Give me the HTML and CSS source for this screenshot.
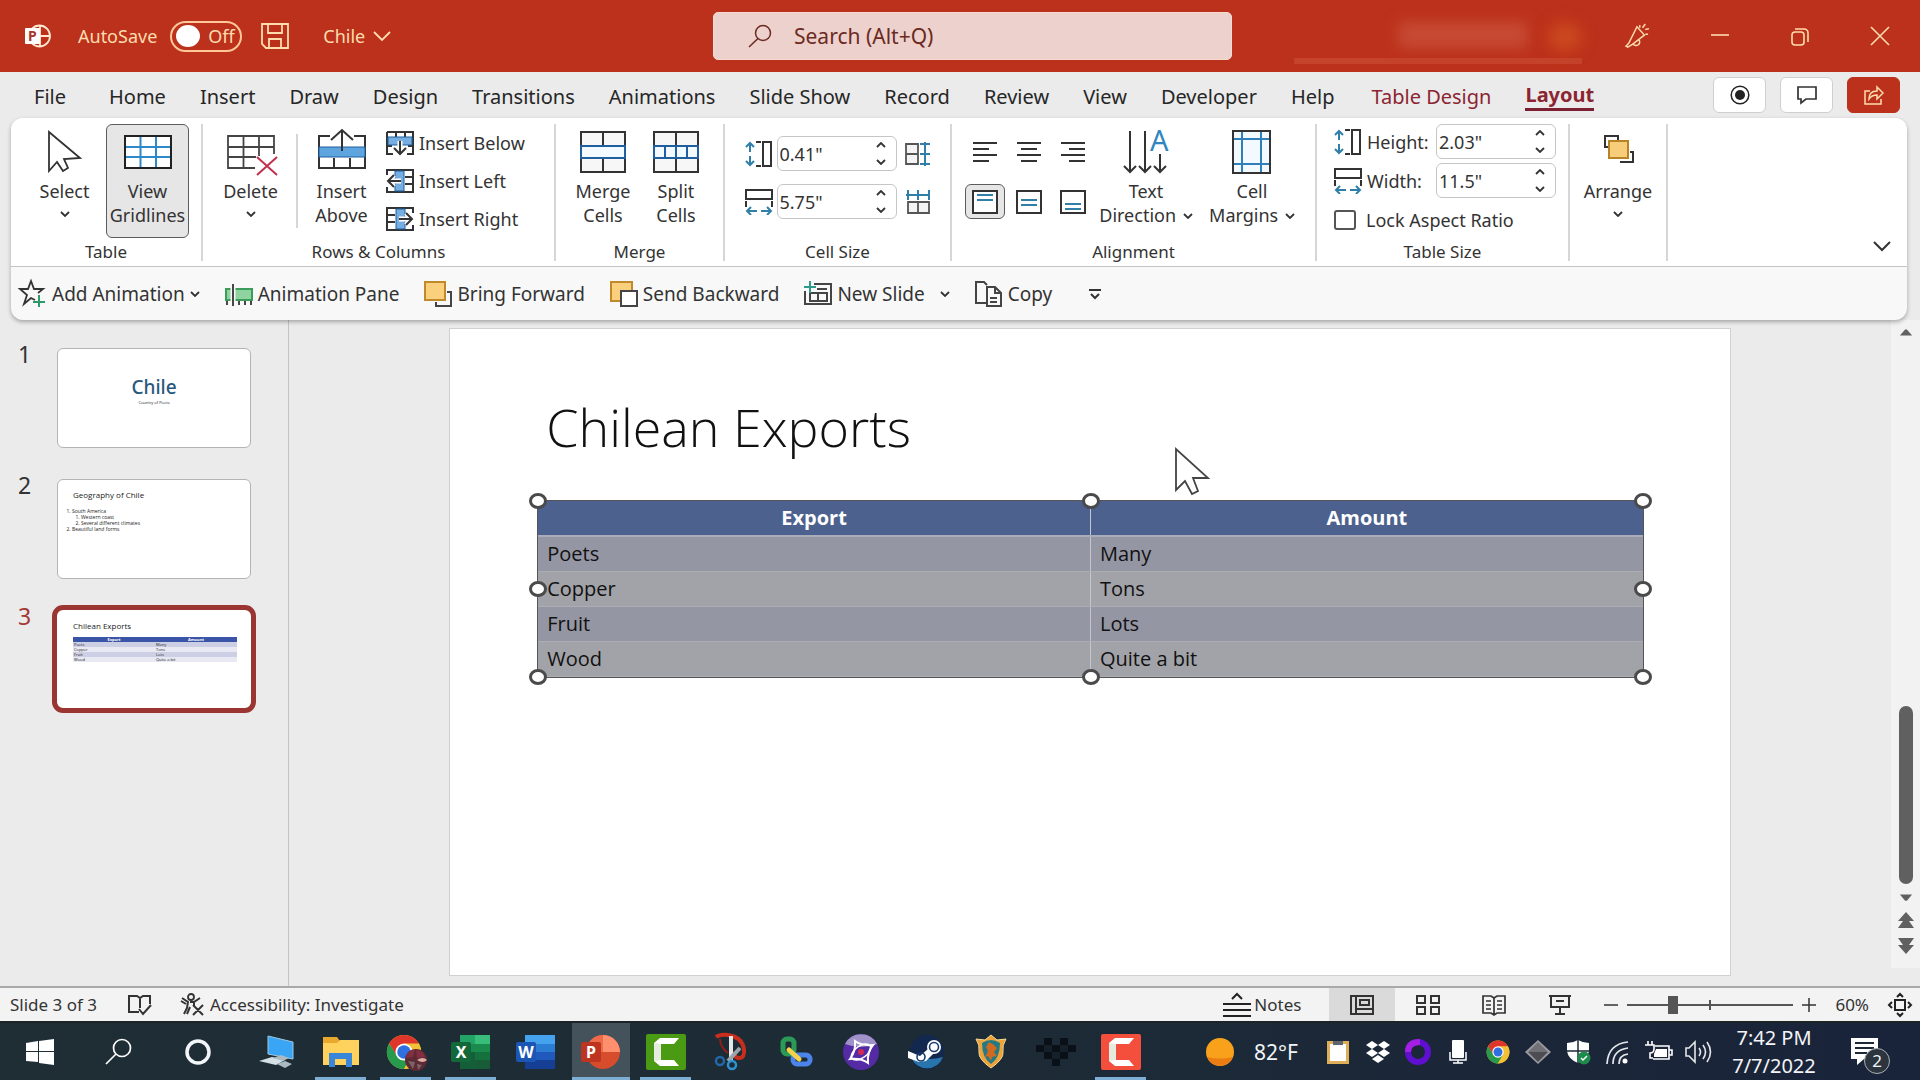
FILE: index.html
```html
<!DOCTYPE html>
<html lang="en">
<head>
  <meta charset="UTF-8">
  <title>Chile - PowerPoint</title>
  <link rel="stylesheet" href="styles.css">
</head>
<body>
  <!-- Shared icons -->
  <svg class="defs" aria-hidden="true">
    <symbol id="chev" viewBox="0 0 10 6"><path d="M1 1l4 4 4-4" fill="none" stroke="currentColor" stroke-width="1.8"/></symbol>
    <symbol id="rowHeight" viewBox="0 0 28 26"><path d="M5 2v9M5 15v9M1 6l4-4 4 4M1 20l4 4 4-4" fill="none" stroke="#2f7fa8" stroke-width="2"/><path d="M11 1h5M11 25h5M18 1h8v24h-8z" fill="none" stroke="#333" stroke-width="2"/></symbol>
    <symbol id="colWidth" viewBox="0 0 28 26"><path d="M1 1h26v9H1zM1 12v6M27 12v6" fill="none" stroke="#333" stroke-width="2"/><path d="M2 22h10M16 22h10M6 18l-4 4 4 4M22 18l4 4-4 4" fill="none" stroke="#2f7fa8" stroke-width="2"/></symbol>
    <symbol id="chrome" viewBox="0 0 40 40">
      <circle cx="20" cy="20" r="19" fill="#f3c136"/>
      <path d="M20 1A19 19 0 0 0 3.500 10.500L12 25l8-5 16.500-9.500A19 19 0 0 0 20 1z" fill="#e0352b"/>
      <path d="M3.500 10.500A19 19 0 0 0 20 39l8-14-8-5-8 4z" fill="#279a4c"/>
      <path d="M36.500 10.500H20l8.500 14.500L20 39A19 19 0 0 0 36.500 10.500z" fill="#f3c136"/>
      <circle cx="20" cy="20" r="9.500" fill="#fff"/><circle cx="20" cy="20" r="7.500" fill="#2f6fe0"/>
    </symbol>
    <symbol id="camtasia" viewBox="0 0 40 36"><path d="M33 4H14l-6 5v18l6 5h19l-5-6H15V10h13z" fill="#fff"/><path d="M8 9l7 1v16l-7 1z" fill="#e4ece0"/></symbol>
  </svg>

  <!-- Title bar -->
  <header class="titlebar">
    <div class="title-left">
      <svg class="app-icon" viewBox="0 0 26 26"><circle cx="14.500" cy="13" r="10.500" fill="none" stroke="#ffe9d0" stroke-width="1.800"/><path d="M15 2v22M15 13h10" stroke="#ffe9d0" stroke-width="1.800"/><rect y="5" width="15" height="16" rx="1" fill="#fff"/><text x="3" y="18" class="logo-letter small">P</text></svg>
      <label class="autosave" for="autosave">AutoSave</label>
      <span class="switch"><input type="checkbox" id="autosave"><span>Off</span></span>
      <button class="save" aria-label="Save"><svg viewBox="0 0 28 26"><path d="M1 1h26v24H5l-4-4zM7 1v9h14V1M8 25v-9h12v9" fill="none" stroke="#ffdcae" stroke-width="1.800"/></svg></button>
      <button class="doc-name">Chile <svg viewBox="0 0 18 10"><path d="M1 1l8 8 8-8" fill="none" stroke="#ffdcae" stroke-width="1.800"/></svg></button>
    </div>
    <div class="search">
      <svg viewBox="0 0 24 24"><circle cx="15" cy="9" r="7.500" fill="none" stroke="#6b2a22" stroke-width="1.500"/><path d="M10 14.500L1 23" stroke="#6b2a22" stroke-width="1.600"/></svg>
      <input type="text" aria-label="Search" placeholder="Search (Alt+Q)">
    </div>
    <div class="title-right">
      <div class="account"><span class="account-name"></span><span class="account-pic"></span></div>
      <button aria-label="Coming soon"><svg class="i26" viewBox="0 0 26 26"><path d="M1 24l3-3L13 3l8 9L8 22l-5 3zM9 22a3.500 3.500 0 1 0 6-5M16 1v3M22 0l-3 4M26 5l-4 1M25 11h-3" fill="none" stroke="#ffdcae" stroke-width="1.600"/></svg></button>
      <button aria-label="Minimize"><svg class="i20" viewBox="0 0 20 20"><path d="M1 9h18" stroke="#ffdcae" stroke-width="1.600"/></svg></button>
      <button aria-label="Restore"><svg class="i20" viewBox="0 0 20 20"><rect x="2" y="6" width="12" height="13" rx="3" fill="none" stroke="#ffdcae" stroke-width="1.600"/><path d="M5 3h9a4 4 0 0 1 4 4v9" fill="none" stroke="#ffdcae" stroke-width="1.600"/></svg></button>
      <button aria-label="Close"><svg class="i20" viewBox="0 0 20 20"><path d="M1 1l18 18M19 1L1 19" stroke="#ffdcae" stroke-width="1.600"/></svg></button>
    </div>
  </header>

  <!-- Ribbon tabs -->
  <nav class="tabs">
    <a href="#" class="file">File</a>
    <a href="#">Home</a>
    <a href="#">Insert</a>
    <a href="#">Draw</a>
    <a href="#">Design</a>
    <a href="#">Transitions</a>
    <a href="#">Animations</a>
    <a href="#">Slide Show</a>
    <a href="#">Record</a>
    <a href="#">Review</a>
    <a href="#">View</a>
    <a href="#">Developer</a>
    <a href="#">Help</a>
    <a href="#" class="context">Table Design</a>
    <a href="#" class="context active">Layout</a>
    <div class="tab-actions">
      <button aria-label="Record"><svg class="i20" viewBox="0 0 20 20"><circle cx="10" cy="10" r="8.800" fill="none" stroke="#222" stroke-width="1.500"/><circle cx="10" cy="10" r="5" fill="#222"/></svg></button>
      <button aria-label="Comments"><svg class="i20" viewBox="0 0 20 20"><path d="M1 2h18v12H9l-5 4v-4H1z" fill="none" stroke="#333" stroke-width="1.700"/></svg></button>
      <button class="share" aria-label="Share"><svg class="i20" viewBox="0 0 20 20"><path d="M6 6H1v13h16v-5M5 14c0-6 4-8 8-8V2l6 6-6 6v-4c-4 0-6 1-8 4z" fill="none" stroke="#ffdcae" stroke-width="1.500"/></svg></button>
    </div>
  </nav>

  <!-- Ribbon -->
  <section class="ribbon">
    <div class="groups">
      <div class="group g-table">
        <div class="group-body">
          <button class="big w83"><svg viewBox="0 0 48 44"><path d="M8 2v39l8-9 6 9 5-3-4-9 16-1z" fill="#fff" stroke="#333" stroke-width="1.800"/></svg><span>Select</span><svg class="chev"><use href="#chev"/></svg></button>
          <button class="big w83 pressed"><svg viewBox="0 0 48 44"><rect x="1" y="6" width="46" height="32" fill="#fff"/><path d="M16.500 6v32M32 6v32M1 17h46M1 27h46" stroke="#2b88c9" stroke-width="2"/><rect x="1" y="6" width="46" height="32" fill="none" stroke="#222" stroke-width="2"/></svg><span>View<br>Gridlines</span></button>
        </div>
        <div class="group-label">Table</div>
      </div>
      <div class="group g-rows">
        <div class="group-body rows-body">
          <button class="big w83"><svg viewBox="0 0 48 44"><path d="M28 38H1V6h46v18M16.500 6v32M32 6v20M1 17h46M1 27h28" fill="none" stroke="#444" stroke-width="1.800"/><path d="M30 27l20 18M50 27L30 45" stroke="#c2304d" stroke-width="2"/></svg><span>Delete</span><svg class="chev"><use href="#chev"/></svg></button>
          <i class="divider"></i>
          <button class="big w83"><svg viewBox="0 0 48 44"><path d="M12 6H1v32h46V6H36M16 28v10M32 28v10" fill="none" stroke="#333" stroke-width="2"/><rect x="1" y="17" width="46" height="10" fill="#5ea5df" stroke="#1f5f9e"/><path d="M24 21V0M13 10L24 0l11 10" fill="none" stroke="#333" stroke-width="2"/></svg><span>Insert<br>Above</span></button>
          <div class="stack">
            <button><svg viewBox="0 0 28 24"><path d="M1 1h26v22h-6M7 23H1V1M10 1v5M19 1v5M1 15h5M22 15h5" fill="none" stroke="#333" stroke-width="2"/><path d="M2 6h24v8H2z" fill="#76aee2" stroke="#1f5f9e"/><path d="M14 10v13M8 17l6 6 6-6" fill="none" stroke="#fff" stroke-width="5"/><path d="M14 10v13M8 17l6 6 6-6" fill="none" stroke="#333" stroke-width="2"/></svg>Insert Below</button>
            <button><svg viewBox="0 0 28 24"><path d="M1 6V1h26v22H1v-5M19 8h8M19 15h8" fill="none" stroke="#333" stroke-width="2"/><path d="M9 2h9v20H9z" fill="#76aee2" stroke="#1f5f9e"/><path d="M15 12H2M8 6l-6 6 6 6" fill="none" stroke="#fff" stroke-width="5"/><path d="M15 12H2M8 6l-6 6 6 6" fill="none" stroke="#333" stroke-width="2"/></svg>Insert Left</button>
            <button><svg viewBox="0 0 28 24"><path d="M27 6V1H1v22h26v-5M1 8h8M1 15h8" fill="none" stroke="#333" stroke-width="2"/><path d="M10 2h9v20h-9z" fill="#76aee2" stroke="#1f5f9e"/><path d="M13 12h13M20 6l6 6-6 6" fill="none" stroke="#fff" stroke-width="5"/><path d="M13 12h13M20 6l6 6-6 6" fill="none" stroke="#333" stroke-width="2"/></svg>Insert Right</button>
          </div>
        </div>
        <div class="group-label">Rows &amp; Columns</div>
      </div>
      <div class="group g-merge">
        <div class="group-body">
          <button class="big w73"><svg viewBox="0 0 48 44"><path d="M2 2h44v40H2zM24 2v14M24 28v14" fill="#f7f7f7" stroke="#333" stroke-width="2"/><path d="M2 16h44v12H2z" fill="#f2f9ff" stroke="#1f5fa0" stroke-width="2"/></svg><span>Merge<br>Cells</span></button>
          <button class="big w73"><svg viewBox="0 0 48 44"><path d="M2 2h44v40H2zM24 2v40" fill="#f7f7f7" stroke="#333" stroke-width="2"/><path d="M2 16h44v12H2zM13 16v12M24 16v12M35 16v12" fill="#f2f9ff" stroke="#1f5fa0" stroke-width="2"/></svg><span>Split<br>Cells</span></button>
        </div>
        <div class="group-label">Merge</div>
      </div>
      <div class="group g-cell">
        <div class="group-body fields">
          <div class="field">
            <svg class="i28"><use href="#rowHeight"/></svg>
            <span class="spin"><input type="text" aria-label="Row height" value='0.41"'><span class="arrows"><svg class="up"><use href="#chev"/></svg><svg><use href="#chev"/></svg></span></span>
            <button aria-label="Distribute rows"><svg class="i26" viewBox="0 0 26 24"><path d="M1 2h12v20H1zM1 12h12" fill="#f3f3f3" stroke="#555" stroke-width="1.800"/><path d="M20 0v24M15 2h10M15 12h10M15 22h10" stroke="#2f7fa8" stroke-width="2"/></svg></button>
          </div>
          <div class="field">
            <svg class="i28"><use href="#colWidth"/></svg>
            <span class="spin"><input type="text" aria-label="Column width" value='5.75"'><span class="arrows"><svg class="up"><use href="#chev"/></svg><svg><use href="#chev"/></svg></span></span>
            <button aria-label="Distribute columns"><svg class="i26" viewBox="0 0 26 24"><path d="M3 12h21v11H3zM13 12v11" fill="#f3f3f3" stroke="#555" stroke-width="1.800"/><path d="M1 5h24M3 0v10M13 0v10M24 0v10" stroke="#2f7fa8" stroke-width="2"/></svg></button>
          </div>
        </div>
        <div class="group-label">Cell Size</div>
      </div>
      <div class="group g-align">
        <div class="group-body">
          <div class="align-grid">
            <button aria-label="Align left"><svg class="i26" viewBox="0 0 26 24"><path d="M1 3h24M1 9h16M1 15h24M1 21h16" stroke="#333" stroke-width="2"/></svg></button>
            <button aria-label="Center"><svg class="i26" viewBox="0 0 26 24"><path d="M1 3h24M5 9h16M1 15h24M5 21h16" stroke="#333" stroke-width="2"/></svg></button>
            <button aria-label="Align right"><svg class="i26" viewBox="0 0 26 24"><path d="M1 3h24M9 9h16M1 15h24M9 21h16" stroke="#333" stroke-width="2"/></svg></button>
            <button class="pressed" aria-label="Align top"><svg class="i26" viewBox="0 0 26 24"><path d="M1 1h24v22H1z" fill="#fff" stroke="#333" stroke-width="2"/><path d="M5 5h16M5 10h16" stroke="#2f7fa8" stroke-width="2"/></svg></button>
            <button aria-label="Center vertically"><svg class="i26" viewBox="0 0 26 24"><path d="M1 1h24v22H1z" fill="#fff" stroke="#333" stroke-width="2"/><path d="M5 10h16M5 15h16" stroke="#2f7fa8" stroke-width="2"/></svg></button>
            <button aria-label="Align bottom"><svg class="i26" viewBox="0 0 26 24"><path d="M1 1h24v22H1z" fill="#fff" stroke="#333" stroke-width="2"/><path d="M5 14h16M5 19h16" stroke="#2f7fa8" stroke-width="2"/></svg></button>
          </div>
          <button class="big w106"><svg viewBox="0 0 48 44"><path d="M8 1v41M2 36l6 6 6-6M23 1v41M17 36l6 6 6-6M38 24v18M32 36l6 6 6-6" fill="none" stroke="#333" stroke-width="2"/><text x="28" y="21" class="icon-a">A</text></svg><span>Text<br>Direction <svg class="chev"><use href="#chev"/></svg></span></button>
          <button class="big w106"><svg viewBox="0 0 48 44"><path d="M5 1h37v42H5z" fill="#f2f9ff"/><path d="M14 1v42M33 1v42M5 9h37M5 34h37" stroke="#2f7fb8" stroke-width="2"/><path d="M5 1h37v42H5z" fill="none" stroke="#333" stroke-width="2"/></svg><span>Cell<br>Margins <svg class="chev"><use href="#chev"/></svg></span></button>
        </div>
        <div class="group-label">Alignment</div>
      </div>
      <div class="group g-size">
        <div class="group-body size-rows">
          <div class="size-row">
            <svg class="i28"><use href="#rowHeight"/></svg><label for="th">Height:</label>
            <span class="spin"><input type="text" id="th" value='2.03"'><span class="arrows"><svg class="up"><use href="#chev"/></svg><svg><use href="#chev"/></svg></span></span>
          </div>
          <div class="size-row">
            <svg class="i28"><use href="#colWidth"/></svg><label for="tw">Width:</label>
            <span class="spin"><input type="text" id="tw" value='11.5"'><span class="arrows"><svg class="up"><use href="#chev"/></svg><svg><use href="#chev"/></svg></span></span>
          </div>
          <div class="size-row"><input type="checkbox" id="lock"><label for="lock">Lock Aspect Ratio</label></div>
        </div>
        <div class="group-label">Table Size</div>
      </div>
      <div class="group g-arrange">
        <div class="group-body">
          <button class="big w83"><svg viewBox="0 0 48 44"><path d="M17 17h-6V6h13v5M31 32h8v-10h-3M26 32h13" fill="none" stroke="#333" stroke-width="2"/><path d="M15 11h19v17H15z" fill="#f8cd79" stroke="#b98325" stroke-width="2"/></svg><span>Arrange</span><svg class="chev"><use href="#chev"/></svg></button>
        </div>
      </div>
      <button class="collapse" aria-label="Ribbon display options"><svg viewBox="0 0 18 10"><path d="M1 1l8 8 8-8" fill="none" stroke="#333" stroke-width="2"/></svg></button>
    </div>

    <div class="quick">
      <button><svg viewBox="0 0 28 26"><path d="M16 19l-4-2-7 6 3-9-7-6h8l3-8 3 8h9l-5 4" fill="none" stroke="#333" stroke-width="1.800"/><path d="M20 14v12M14 21h12" stroke="#2e9a68" stroke-width="2"/></svg>Add Animation <svg class="chev"><use href="#chev"/></svg></button>
      <button><svg viewBox="0 0 28 26"><path d="M1 8h26v11H1z" fill="#8fd3a1" stroke="#3c9c5a" stroke-width="2"/><path d="M8 3v22" stroke="#f7f7f7" stroke-width="5"/><path d="M8 3v22M2 20v4M14 20v4M20 20v4M26 20v4" stroke="#333" stroke-width="1.800"/></svg>Animation Pane</button>
      <button><svg viewBox="0 0 28 26"><path d="M1 1h20v18H1z" fill="#fad07c" stroke="#c08a2c" stroke-width="2"/><path d="M23 11h4v14H12v-4" fill="none" stroke="#444" stroke-width="2"/></svg>Bring Forward</button>
      <button><svg viewBox="0 0 28 26"><path d="M1 1h21v19H1z" fill="#fad07c" stroke="#c08a2c" stroke-width="2"/><path d="M11 10h16v15H11z" fill="#fff" stroke="#444" stroke-width="2"/></svg>Send Backward</button>
      <button><svg viewBox="0 0 28 26"><path d="M10 3h17v20H1V10M6 20V12h17v8zM13 8h10M14 12v8" fill="none" stroke="#444" stroke-width="2"/><path d="M6 0v12M0 6h12" stroke="#2e9a8a" stroke-width="2"/></svg>New Slide <svg class="chev far"><use href="#chev"/></svg></button>
      <button><svg viewBox="0 0 28 26"><path d="M11 22H1V1h8l3 3M12 6h8l6 6v13H12zM20 6v6h6M15 17h7M15 21h7" fill="none" stroke="#444" stroke-width="2"/></svg>Copy</button>
      <button aria-label="Customize Quick Access Toolbar" class="more"><svg viewBox="0 0 12 12"><path d="M0 2h12M2 6l4 4 4-4" fill="none" stroke="#333" stroke-width="2"/></svg></button>
    </div>
  </section>

  <!-- Workspace -->
  <main class="work">
    <aside class="thumbs">
      <div class="thumb-row">
        <span class="num">1</span>
        <div class="thumb t-title"><b>Chile</b><small>Country of Poets</small></div>
      </div>
      <div class="thumb-row">
        <span class="num">2</span>
        <div class="thumb t-list">
          <h4>Geography of Chile</h4>
          <ol><li>South America<ol><li>Western coast</li><li>Several different climates</li></ol></li><li>Beautiful land forms</li></ol>
        </div>
      </div>
      <div class="thumb-row current">
        <span class="num">3</span>
        <div class="thumb t-table">
          <h4>Chilean Exports</h4>
          <table>
            <tr><th>Export</th><th>Amount</th></tr>
            <tr><td>Poets</td><td>Many</td></tr>
            <tr><td>Copper</td><td>Tons</td></tr>
            <tr><td>Fruit</td><td>Lots</td></tr>
            <tr><td>Wood</td><td>Quite a bit</td></tr>
          </table>
        </div>
      </div>
    </aside>

    <div class="stage">
      <article class="slide">
        <h1>Chilean Exports</h1>
        <div class="table-box">
          <table>
            <thead><tr><th>Export</th><th>Amount</th></tr></thead>
            <tbody>
              <tr><td>Poets</td><td>Many</td></tr>
              <tr><td>Copper</td><td>Tons</td></tr>
              <tr><td>Fruit</td><td>Lots</td></tr>
              <tr><td>Wood</td><td>Quite a bit</td></tr>
            </tbody>
          </table>
          <i class="handle nw"></i><i class="handle n"></i><i class="handle ne"></i>
          <i class="handle w"></i><i class="handle e"></i>
          <i class="handle sw"></i><i class="handle s"></i><i class="handle se"></i>
        </div>
        <svg class="cursor" viewBox="0 0 36 48"><path d="M2 2v41l9-9 7 13 6-3-5-13h15z" fill="#fff" stroke="#444" stroke-width="1.800"/></svg>
      </article>
    </div>

    <div class="scroll">
      <svg viewBox="0 0 16 8"><path d="M1 8l6-7h2l6 7z" fill="#606060"/></svg>
      <div class="track"><i class="knob"></i></div>
      <svg viewBox="0 0 16 8"><path d="M1 0l6 7h2l6-7z" fill="#606060"/></svg>
      <svg class="double" viewBox="0 0 16 16"><path d="M0 9l8-9 8 9zM0 16l5-7h6l5 7z" fill="#606060"/></svg>
      <svg class="double" viewBox="0 0 16 16"><path d="M0 7l8 9 8-9zM0 0l5 7h6l5-7z" fill="#606060"/></svg>
    </div>
  </main>

  <!-- Status bar -->
  <footer class="status">
    <span class="slide-no">Slide 3 of 3</span>
    <button class="proof" aria-label="Spelling"><svg class="i24" viewBox="0 0 24 22"><path d="M11 18H1V2h8l3 2 3-2h7v8M12 4v10M11 15l4 5 8-9" fill="none" stroke="#333" stroke-width="2"/></svg></button>
    <button class="a11y"><svg class="i24" viewBox="0 0 24 22"><circle cx="11" cy="3" r="3" fill="none" stroke="#333" stroke-width="1.800"/><path d="M2 4l6 4-1 6-3 6M1 7l5 3M20 4l-6 4v4M7 20l3-7M13 11l10 10M23 11L13 21M10 8h4" fill="none" stroke="#333" stroke-width="2"/></svg>Accessibility: Investigate</button>
    <div class="status-right">
      <button class="notes"><svg viewBox="0 0 28 24"><path d="M0 11h28M0 17h28M0 23h28M9 6l5-5 5 5" fill="none" stroke="#222" stroke-width="2"/></svg>Notes</button>
      <button class="view on" aria-label="Normal"><svg class="i24" viewBox="0 0 24 20"><path d="M1 1h22v18H1zM6 1v18M6 14h17M10 5h9v5h-9z" fill="none" stroke="#333" stroke-width="2"/></svg></button>
      <button class="view" aria-label="Slide Sorter"><svg class="i24" viewBox="0 0 24 20"><path d="M1 1h8v7H1zM15 1h8v7h-8zM1 12h8v7H1zM15 12h8v7h-8z" fill="none" stroke="#333" stroke-width="2"/></svg></button>
      <button class="view" aria-label="Reading View"><svg class="i24" viewBox="0 0 24 20"><path d="M1 1h8l3 2 3-2h8v17h-8l-3 2-3-2H1zM12 3v16M4 6h5M4 10h5M4 14h5M15 6h5M15 10h5M15 14h5" fill="none" stroke="#333" stroke-width="1.700"/></svg></button>
      <button class="view" aria-label="Slide Show"><svg class="i24" viewBox="0 0 24 20"><path d="M1 1h22M3 1v11h18V1M12 12v7M7 19h10M8 6h8" fill="none" stroke="#333" stroke-width="2"/></svg></button>
      <div class="zoom">
        <button aria-label="Zoom out"><svg viewBox="0 0 14 14"><path d="M0 7h14" stroke="#333" stroke-width="1.500"/></svg></button>
        <input type="range" min="10" max="210" value="62" aria-label="Zoom">
        <button aria-label="Zoom in"><svg viewBox="0 0 14 14"><path d="M0 7h14M7 0v14" stroke="#333" stroke-width="1.500"/></svg></button>
      </div>
      <button class="pct">60%</button>
      <button aria-label="Fit slide"><svg class="i24" viewBox="0 0 24 22"><path d="M7 6h10v10H7zM9 3l3-3 3 3M9 19l3 3 3-3M4 8l-3 3 3 3M20 8l3 3-3 3" fill="none" stroke="#222" stroke-width="2"/></svg></button>
    </div>
  </footer>

  <!-- Windows taskbar -->
  <div class="taskbar">
    <button class="sys" aria-label="Start"><svg class="t28" viewBox="0 0 28 26"><path d="M0 4l12-2v10H0zM13 2l15-2v12H13zM0 13h12v10L0 22zM13 13h15v13l-15-2z" fill="#fff"/></svg></button>
    <button class="sys" aria-label="Search"><svg class="t28" viewBox="0 0 28 26"><circle cx="17" cy="9" r="8.500" fill="none" stroke="#fff" stroke-width="1.700"/><path d="M11 15L1 25" stroke="#fff" stroke-width="1.700"/></svg></button>
    <button class="sys" aria-label="Cortana"><svg class="t28" viewBox="0 0 28 26"><circle cx="14" cy="13" r="11" fill="none" stroke="#f3f6f8" stroke-width="3.500"/></svg></button>
    <div class="apps">
      <button aria-label="This PC"><svg viewBox="0 0 40 36"><path d="M12 2l25 6v17l-25-5z" fill="#39a5f4" stroke="#9ec9e4"/><path d="M3 27l13-4 13 3-9 5z" fill="#d5e0e6"/><path d="M17 24l8-3 8 3-6 3zM21 30l8-3 7 3-7 4z" fill="#aab9c2"/></svg></button>
      <button class="open" aria-label="File Explorer"><svg viewBox="0 0 40 36"><path d="M2 3h14l3 4h18v24H2z" fill="#e8a92c"/><path d="M2 9l14 0 3-3h19v25H2z" fill="#ffd25e"/><path d="M8 33V19h23v14h-6v-8H14v8z" fill="#3a86d8"/></svg></button>
      <button class="open" aria-label="Chrome"><svg viewBox="0 0 40 36"><use href="#chrome" width="36" height="36"/><circle cx="30" cy="26" r="11" fill="#5b2a35"/><path d="M20 24q2-9 9-8l-2 7zM30 16q8 1 9 7l-8 1z" fill="#832f40"/><path d="M22 27l7 1-2 7zM31 30l5 1-4 5z" fill="#7b6468"/><path d="M31 26q6-4 10 0-4 4-10 0z" fill="#e0aca4"/></svg></button>
      <button class="open" aria-label="Excel"><svg viewBox="0 0 40 36"><path d="M9 1h30v34H9z" fill="#1a8a4d"/><path d="M9 1h15v9H9z" fill="#23a366"/><path d="M24 1h15v9H24z" fill="#38bd7b"/><path d="M9 18h15v17H9z" fill="#155f38"/><path d="M24 18h15v8H24z" fill="#14713e"/><path d="M24 26h15v9H24z" fill="#175c37"/><rect y="8" width="20" height="20" rx="2" fill="#13683a"/><text x="10" y="24" class="logo-letter">X</text></svg></button>
      <button aria-label="Word"><svg viewBox="0 0 40 36"><path d="M9 1h30v9H9z" fill="#45a2ee"/><path d="M9 10h30v8H9z" fill="#2b7cd3"/><path d="M9 18h30v8H9z" fill="#1f59bb"/><path d="M9 26h30v9H9z" fill="#153f94"/><rect y="8" width="20" height="20" rx="2" fill="#1b56b4"/><text x="10" y="24" class="logo-letter">W</text></svg></button>
      <button class="open current" aria-label="PowerPoint"><svg viewBox="0 0 40 36"><circle cx="22" cy="18" r="17" fill="#d64c2c"/><path d="M22 1a17 17 0 0 1 17 17H22z" fill="#ff8f6d"/><path d="M22 1A17 17 0 0 0 5 18h17z" fill="#ee6b4a"/><rect y="8" width="20" height="20" rx="2" fill="#bd3520"/><text x="10" y="24" class="logo-letter">P</text></svg></button>
      <button class="open" aria-label="Camtasia"><svg viewBox="0 0 40 36"><rect width="40" height="36" rx="2" fill="#4b9a13"/><use href="#camtasia"/></svg></button>
      <button aria-label="Snipping"><svg viewBox="0 0 40 36"><path d="M5 3q4-3 12-2 14 2 16 14 1 9-5 9-4 0-7-6" fill="none" stroke="#c92d1c" stroke-width="4"/><path d="M9 5q0 8 8 14" fill="none" stroke="#8f1f18" stroke-width="2"/><path d="M18 2l4 0v25h-4z" fill="#e3e7e9"/><path d="M29 14L17 27" stroke="#9aa5ab" stroke-width="4"/><circle cx="9" cy="27" r="4" fill="none" stroke="#2268a8" stroke-width="2.500"/><circle cx="21" cy="31" r="4" fill="none" stroke="#2e91d0" stroke-width="2.500"/></svg></button>
      <button aria-label="Links"><svg viewBox="0 0 40 36"><rect x="7" y="5" width="11" height="15" rx="4" fill="none" stroke="#2a9a56" stroke-width="5"/><rect x="17" y="21" width="17" height="9" rx="4" fill="none" stroke="#4b84ea" stroke-width="5"/><path d="M13 16l10 9" stroke="#f4d24c" stroke-width="5" stroke-linecap="round"/></svg></button>
      <button aria-label="Clipchamp"><svg viewBox="0 0 40 36"><circle cx="20" cy="18" r="18" fill="#552aa5"/><path d="M4 10a18 18 0 0 1 32 0q-16 6-32 0z" fill="#9f92c8"/><path d="M14 7q7 5 18 4-6 7-5 18-7-5-18-4 6-8 5-18z" fill="none" stroke="#fff" stroke-width="2"/><ellipse cx="20" cy="18" rx="11" ry="6" transform="rotate(-35 20 18)" fill="none" stroke="#fff" stroke-width="1.500"/><circle cx="20" cy="18" r="3" fill="#d22952"/></svg></button>
      <button aria-label="Steam"><svg viewBox="0 0 40 36"><circle cx="21" cy="18" r="17" fill="#12284f"/><path d="M5 23a17 17 0 0 0 32 0q-14 4-32 0z" fill="#2875ad"/><path d="M2 17l12 5 8-7 7 3-9 9-7 1-11-4z" fill="#fff"/><circle cx="28" cy="13" r="7" fill="#fff"/><circle cx="28" cy="13" r="4.500" fill="none" stroke="#163d70" stroke-width="1.600"/><circle cx="15" cy="23" r="4" fill="none" stroke="#163d70" stroke-width="1.600"/></svg></button>
      <button aria-label="Shield"><svg viewBox="0 0 40 36"><path d="M5 5l9 1 6-5 6 5 9-1q-4 6-3 13T20 34Q7 25 8 18T5 5z" fill="#eda33b" stroke="#f6d994"/><path d="M11 9q9-6 18 0 0 15-9 21-9-6-9-21z" fill="#237a83"/><path d="M18 8l5 3 3 3-3 4 3 4-5 1-1 4-3-5-3 1 3-6-2-4z" fill="#cf6a20"/></svg></button>
      <button aria-label="Pixel heart"><svg viewBox="0 0 40 36"><path d="M8 4h8v7H8zM24 4h8v7h-8zM0 11h40v7H0zM8 18h24v7H8zM16 25h8v7h-8z" fill="#151f27"/><path d="M8 4h8v7H8zM24 4h8v7h-8zM0 11h8v7H0zM16 11h8v7h-8zM32 11h8v7h-8zM8 18h8v7H8zM24 18h8v7h-8zM16 25h8v7h-8z" fill="#091017"/></svg></button>
      <button class="open" aria-label="Recorder"><svg viewBox="0 0 40 36"><rect width="40" height="36" rx="2" fill="#f44f3d"/><use href="#camtasia"/></svg></button>
    </div>
    <div class="tray">
      <button class="weather"><svg viewBox="0 0 30 28"><circle cx="15" cy="14" r="14" fill="#f9a11a"/><path d="M2 19a14 14 0 0 0 26 0q-13 3-26 0z" fill="#ec7d12"/></svg>82°F</button>
      <div class="tray-icons">
        <button aria-label="Clipboard"><svg viewBox="0 0 26 24"><path d="M2 1h22v23H2z" fill="#dfae58"/><path d="M5 4h16v17H5z" fill="#fff"/><path d="M8 1h10v4H8z" fill="#5d6670"/></svg></button>
        <button aria-label="Dropbox"><svg viewBox="0 0 26 24"><path d="M7 1l6 4-6 4-6-4zM19 1l6 4-6 4-6-4zM7 9l6 4-6 4-6-4zM19 9l6 4-6 4-6-4zM13 15l6 4-6 4-6-4z" fill="#fff"/></svg></button>
        <button aria-label="Record ring"><svg viewBox="0 0 26 24"><circle cx="13" cy="12" r="10" fill="none" stroke="#5f0fd0" stroke-width="6"/><path d="M3 12q0-10 12-10" fill="none" stroke="#a41fe4" stroke-width="6"/></svg></button>
        <button aria-label="Microphone"><svg viewBox="0 0 26 24"><rect x="7" y="0" width="12" height="18" rx="1" fill="#fff"/><path d="M5 12v8h16v-8M13 20v3M8 23h10" fill="none" stroke="#fff" stroke-width="1.500"/></svg></button>
        <button aria-label="Chrome"><svg><use href="#chrome"/></svg></button>
        <button aria-label="Diamond"><svg viewBox="0 0 26 24"><path d="M13 0l13 12-13 12L0 12z" fill="#9a9a9f"/><path d="M13 2l10 10H3z" fill="#707076"/><path d="M13 22l10-10H3z" fill="#4c4c52"/></svg></button>
        <button aria-label="Defender"><svg viewBox="0 0 26 24"><path d="M13 0q5 3 11 3v8q-1 8-11 12Q3 19 2 11V3q6 0 11-3z" fill="#fff"/><path d="M13 0v23M2 11h22" stroke="#1c2935" stroke-width="1.500"/><circle cx="19" cy="18" r="6.500" fill="#1b8c4b"/><path d="M16 18l2 2 4-4" fill="none" stroke="#fff" stroke-width="1.500"/></svg></button>
        <button aria-label="Network"><svg viewBox="0 0 26 24"><path d="M2 24Q3 4 23 2M8 24Q8 10 23 8M14 24q0-9 9-10" fill="none" stroke="#e3e7ea" stroke-width="1.700"/><circle cx="20" cy="21" r="2.500" fill="#fff"/></svg></button>
        <button aria-label="Battery"><svg viewBox="0 0 26 24"><path d="M10 6h14v13H8M24 10h3v5h-3M3 1v4M7 1v4M0 5h9v4q0 4-4 4v5h3" fill="none" stroke="#fff" stroke-width="1.600"/><path d="M11 9h11v8H9v-3z" fill="#fff"/></svg></button>
        <button aria-label="Volume"><svg viewBox="0 0 26 24"><path d="M1 8h3l6-6v20l-6-6H1zM14 8q3 4 0 8M18 5q5 7 0 14M22 2q7 10 0 20" fill="none" stroke="#e3e7ea" stroke-width="1.600"/></svg></button>
      </div>
      <button class="clock">7:42 PM<br>7/7/2022</button>
      <button class="notify" aria-label="Notifications"><svg viewBox="0 0 28 28"><path d="M0 0h27v21H13l-7 6v-6H0z" fill="#fff"/><path d="M4 5h19M4 10h19M4 15h12" stroke="#1c2935" stroke-width="2"/></svg><span class="badge">2</span></button>
    </div>
  </div>
</body>
</html>
```
FILE: styles.css
```css
* {
  box-sizing: border-box;
}

body {
  margin: 0;
  height: 100vh;
  overflow: hidden;
  display: flex;
  flex-direction: column;
  font-family: "Noto Sans", "Open Sans", sans-serif;
  font-size: 18px;
  color: #333;
  background: #ebebeb;
}

button {
  margin: 0;
  padding: 0;
  border: none;
  background: none;
  color: inherit;
  font: inherit;
}

input {
  font: inherit;
  color: inherit;
}

svg {
  display: block;
  flex: none;
  overflow: visible;
}

.defs {
  position: absolute;
  width: 0;
  height: 0;
}

.i20 { width: 20px; height: 20px; }
.i24 { width: 24px; height: 22px; }
.i26 { width: 26px; height: 24px; }
.i28 { width: 28px; height: 26px; }

.chev {
  width: 10px;
  height: 6px;
}

.logo-letter {
  font-size: 16px;
  font-weight: bold;
  text-anchor: middle;
  fill: #fff;
}

.logo-letter.small {
  font-size: 14px;
  text-anchor: start;
  fill: #a8352a;
}

.icon-a {
  font-size: 29px;
  fill: #2f86c0;
}

/* Title bar */
.titlebar {
  display: grid;
  grid-template-columns: 713fr 519fr 688fr;
  align-items: center;
  height: 72px;
  flex: none;
  background: #bc311b;
  color: #ffdcae;
}

.title-left {
  display: flex;
  align-items: center;
  padding-left: 25px;
}

.app-icon {
  width: 26px;
  height: 26px;
}

.autosave {
  margin-left: 27px;
}

.switch {
  display: flex;
  align-items: center;
  gap: 8px;
  width: 72px;
  height: 31px;
  margin-left: 13px;
  padding-left: 4px;
  border: 2px solid #ffc79a;
  border-radius: 16px;
}

.switch input {
  appearance: none;
  width: 24px;
  height: 22px;
  margin: 0;
  border-radius: 50%;
  background: #fff;
}

.save {
  margin-left: 19px;
}

.save svg {
  width: 28px;
  height: 26px;
}

.doc-name {
  display: flex;
  align-items: center;
  gap: 8px;
  margin-left: 34px;
}

.doc-name svg {
  width: 18px;
  height: 10px;
}

.search {
  display: flex;
  align-items: center;
  height: 48px;
  padding-left: 34px;
  border-radius: 5px;
  background: #edd1cc;
  border: 1px solid #f6dcd0;
}

.search svg {
  width: 24px;
  height: 24px;
}

.search input {
  flex: 1;
  min-width: 0;
  margin-left: 20px;
  border: none;
  outline: none;
  background: none;
  font-size: 21px;
}

.search input::placeholder {
  color: #6b2a22;
}

.title-right {
  display: flex;
  justify-content: flex-end;
  align-items: center;
  gap: 60px;
  padding-right: 30px;
}

.account {
  display: flex;
  justify-content: flex-end;
  gap: 20px;
  width: 288px;
  height: 56px;
  padding-top: 14px;
  margin-right: -18px;
  border-bottom: 6px solid #c5422b;
}

.account-name {
  width: 130px;
  height: 26px;
  background: #c74a34;
  filter: blur(7px);
}

.account-pic {
  width: 34px;
  height: 30px;
  border-radius: 50%;
  background: #ca481f;
  filter: blur(7px);
}

/* Tabs */
.tabs {
  display: flex;
  align-items: center;
  flex: none;
  height: 46px;
  padding: 0 20px 0 17px;
  font-size: 20px;
}

.tabs a {
  margin: 2px 17px 0;
  color: #262626;
  text-decoration: none;
  line-height: 27px;
  white-space: nowrap;
}

.tabs .file {
  margin-right: 26px;
}

.tabs .context {
  margin-left: 20px;
  color: #8c2431;
}

.tabs .active {
  margin-left: 17px;
  font-weight: bold;
  border-bottom: 3px solid #7d1f33;
}

.tab-actions {
  display: flex;
  gap: 14px;
  margin-left: auto;
}

.tab-actions button {
  display: flex;
  align-items: center;
  justify-content: center;
  width: 53px;
  height: 36px;
  border: 1px solid #cfcfcf;
  border-radius: 6px;
  background: #fff;
}

.tab-actions .share {
  background: #bc311b;
  border-color: #bc311b;
}

/* Ribbon */
.ribbon {
  flex: none;
  margin: 0 13px 0 11px;
  border-radius: 12px;
  background: #f8f8f8;
  box-shadow: 0 2px 4px rgba(0, 0, 0, 0.3);
  position: relative;
}

.groups {
  display: flex;
  height: 149px;
  padding: 6px 0 5px;
  border-radius: 12px 12px 0 0;
  border-bottom: 1px solid #c4c4c4;
  background: #fff;
}

.group {
  display: flex;
  flex-direction: column;
  justify-content: space-between;
  border-right: 2px solid #d6d6d6;
  white-space: nowrap;
}

.g-table { width: 192px; }
.g-rows { width: 353px; }
.g-merge { width: 169px; }
.g-cell { width: 227px; }
.g-align { width: 365px; }
.g-size { width: 253px; }
.g-arrange { width: 98px; }

.group-body {
  display: flex;
  align-items: flex-start;
  justify-content: center;
  height: 114px;
}

.group-label {
  text-align: center;
  font-size: 17px;
  line-height: 18px;
}

.big {
  display: flex;
  flex-direction: column;
  align-items: center;
  height: 114px;
  padding-top: 5px;
  border: 1px solid transparent;
  border-radius: 6px;
  line-height: 24px;
}

.big > svg {
  width: 48px;
  height: 44px;
  margin-bottom: 5px;
}

.big .chev {
  width: 10px;
  height: 6px;
  margin-top: 8px;
}

.big span .chev {
  display: inline-block;
  margin: 0 0 3px 2px;
}

.w73 { width: 73px; }
.w83 { width: 83px; }
.w106 { width: 106px; }

.pressed {
  background: #e6e6e6;
  border: 1px solid #5c5c5c;
}

.rows-body {
  justify-content: flex-start;
  padding-left: 6px;
}

.divider {
  width: 2px;
  height: 94px;
  margin: 10px 2px 0 4px;
  background: #d6d6d6;
}

.stack {
  display: flex;
  flex-direction: column;
  margin-left: 3px;
}

.stack button {
  display: flex;
  align-items: center;
  gap: 5px;
  height: 38px;
}

.stack svg {
  width: 28px;
  height: 24px;
}

.fields {
  flex-direction: column;
  align-items: center;
  justify-content: flex-start;
  gap: 13px;
  padding-top: 12px;
}

.field {
  display: flex;
  align-items: center;
  gap: 4px;
}

.field button {
  margin-left: 4px;
}

.spin {
  display: flex;
  align-items: center;
  width: 120px;
  height: 35px;
  padding: 0 10px 0 2px;
  border: 1px solid #c6c6c6;
  border-radius: 6px;
  background: #fff;
}

.spin input {
  flex: 1;
  min-width: 0;
  padding: 0;
  border: none;
  outline: none;
  background: none;
}

.arrows {
  display: flex;
  flex-direction: column;
  gap: 11px;
}

.arrows svg {
  width: 10px;
  height: 6px;
}

.arrows .up {
  transform: rotate(180deg);
}

.align-grid {
  display: grid;
  grid-template-columns: repeat(3, 40px);
  gap: 15px 4px;
  margin-left: 3px;
  padding-top: 10px;
}

.align-grid button {
  display: flex;
  align-items: center;
  justify-content: center;
  height: 35px;
  border-radius: 6px;
}

.size-rows {
  flex-direction: column;
  align-items: stretch;
  justify-content: flex-start;
  gap: 4px;
  padding: 0 12px 0 17px;
}

.size-row {
  display: flex;
  align-items: center;
  gap: 5px;
  height: 35px;
}

.size-row .spin {
  margin-left: auto;
}

.size-row input[type="checkbox"] {
  appearance: none;
  width: 22px;
  height: 20px;
  margin: 0 5px 0 0;
  border: 2px solid #555;
  border-radius: 3px;
  background: #fff;
}

.collapse {
  align-self: flex-end;
  margin: 0 16px 10px auto;
}

.collapse svg {
  width: 18px;
  height: 10px;
}

/* Quick access row */
.quick {
  display: flex;
  align-items: center;
  gap: 25px;
  height: 53px;
  padding-left: 8px;
  font-size: 19px;
}

.quick button {
  display: flex;
  align-items: center;
  gap: 5px;
  white-space: nowrap;
}

.quick svg {
  width: 28px;
  height: 26px;
}

.quick .chev {
  width: 10px;
  height: 6px;
}

.quick .far {
  margin-left: 10px;
}

.quick .more {
  margin-left: 12px;
}

.quick .more svg {
  width: 12px;
  height: 12px;
}

/* Workspace */
.work {
  display: flex;
  flex: 1;
  min-height: 0;
  border-bottom: 1px solid #a9a9a9;
}

.thumbs {
  width: 289px;
  flex: none;
  display: flex;
  flex-direction: column;
  gap: 31px;
  padding: 28px 0 0 18px;
  border-right: 1px solid #c4c4c4;
}

.thumb-row {
  display: flex;
  align-items: flex-start;
}

.num {
  width: 39px;
  font-size: 23px;
  line-height: 12px;
}

.thumb {
  width: 194px;
  height: 100px;
  border: 1px solid #b4b4b4;
  border-radius: 6px;
  background: #fff;
  color: #222;
  font-family: "Open Sans", sans-serif;
}

.current .num {
  color: #a33a36;
}

.current .thumb {
  height: 98px;
  outline: 5px solid #9b3531;
  border-color: #fff;
}

.thumb h4 {
  margin: 0;
  font-weight: normal;
  font-size: 8px;
  line-height: 10px;
}

.t-title {
  display: flex;
  flex-direction: column;
  align-items: center;
  padding-top: 27px;
}

.t-title b {
  font: 500 19px/23px "Noto Sans", sans-serif;
  color: #28587c;
}

.t-title small {
  font-size: 4px;
  line-height: 8px;
}

.t-list,
.t-table {
  padding: 10px 13px 0 15px;
}

.t-list ol {
  margin: 0;
  padding-left: 9px;
  font-size: 5px;
  line-height: 6px;
}

.t-list > ol {
  margin: 8px 0 0 -10px;
}

.t-table table {
  width: 100%;
  margin-top: 6px;
  border-collapse: collapse;
  table-layout: fixed;
  font-size: 4px;
  line-height: 5px;
}

.t-table th,
.t-table td {
  padding: 0 1px;
}

.t-table th {
  background: #3a55a8;
  color: #fff;
}

.t-table tr:nth-child(even) { background: #cdd0e4; }
.t-table tr:nth-child(odd) { background: #e8e9f3; }

.stage {
  flex: 1;
  display: flex;
  justify-content: center;
  padding: 8px 0 10px;
}

.slide {
  position: relative;
  width: 80%;
  padding: 65px 86px 0 87px;
  border: 1px solid #d0d0d0;
  background: #fff;
  color: #111;
  font-family: "Open Sans", sans-serif;
}

.slide h1 {
  margin: 0 0 40px 9px;
  font-size: 52px;
  line-height: 66px;
  font-weight: 300;
}

.table-box {
  position: relative;
  border: 1px solid #555;
}

.table-box table {
  width: 100%;
  border-collapse: collapse;
  table-layout: fixed;
  font-size: 20px;
  line-height: 34px;
}

.table-box th {
  padding: 0 9px;
  color: #fff;
  background: #4d618e;
  border-bottom: 2px solid #a9adb9;
}

.table-box td {
  padding: 0 9px;
  background: #a2a3a8;
  border-bottom: 1px solid #acadb2;
}

.table-box tr:nth-child(odd) td {
  background: #9496a3;
}

.table-box tr > :first-child {
  border-right: 1px solid #c4c6cd;
}

.table-box thead tr > :first-child,
.table-box thead th {
  background: #4d618e;
}

.handle {
  position: absolute;
  width: 18px;
  height: 16px;
  border: 3px solid #4a4a4a;
  border-radius: 50%;
  background: #fff;
  transform: translate(-50%, -50%);
}

.nw { left: 0; top: 0; }
.n { left: 50%; top: 0; }
.ne { left: 100%; top: 0; }
.w { left: 0; top: 50%; }
.e { left: 100%; top: 50%; }
.sw { left: 0; top: 100%; }
.s { left: 50%; top: 100%; }
.se { left: 100%; top: 100%; }

.cursor {
  position: absolute;
  left: 724px;
  top: 118px;
  width: 36px;
  height: 48px;
}

.scroll {
  display: flex;
  flex-direction: column;
  align-items: center;
  gap: 10px;
  width: 29px;
  margin-bottom: 18px;
  padding: 8px 0 14px;
  background: #f2f2f2;
}

.scroll svg {
  width: 14px;
  height: 8px;
}

.scroll .double {
  width: 16px;
  height: 16px;
}

.track {
  flex: 1;
  display: flex;
  align-items: flex-end;
}

.knob {
  width: 14px;
  height: 33%;
  border-radius: 7px;
  background: #606060;
}

/* Status bar */
.status {
  display: flex;
  align-items: center;
  flex: none;
  height: 34px;
  padding: 0 8px 0 10px;
  border-top: 1px solid #a9a9a9;
  background: #f3f3f3;
  font-size: 17px;
}

.status button {
  display: flex;
  align-items: center;
  justify-content: center;
}

.proof {
  margin: 0 28px 0 31px;
}

.a11y {
  gap: 6px;
}

.status-right {
  display: flex;
  align-items: center;
  height: 100%;
  margin-left: auto;
}

.notes {
  gap: 3px;
  margin-right: 28px;
}

.notes svg {
  width: 28px;
  height: 24px;
}

.view {
  width: 66px;
  height: 100%;
}

.view.on {
  background: #dadada;
}

.zoom {
  display: flex;
  align-items: center;
  gap: 9px;
  margin-left: 11px;
}

.zoom svg {
  width: 14px;
  height: 14px;
}

.zoom input {
  appearance: none;
  width: 166px;
  height: 18px;
  margin: 0;
  background:
    linear-gradient(#555, #555) 50% 50% / 2px 10px no-repeat,
    linear-gradient(#555, #555) 0 50% / 100% 2px no-repeat;
}

.zoom input::-webkit-slider-thumb {
  appearance: none;
  width: 10px;
  height: 18px;
  background: #555;
}

.pct {
  margin: 0 19px;
}

/* Taskbar */
.taskbar {
  display: flex;
  align-items: center;
  flex: none;
  height: 59px;
  background: linear-gradient(90deg, #1f2d35, #1d2b36 50%, #19233a);
  border-top: 2px solid #1c2428;
  color: #f2f4f6;
}

.taskbar button {
  display: flex;
  align-items: center;
  justify-content: center;
  height: 100%;
}

.taskbar .sys {
  width: 79px;
}

.t28 {
  width: 28px;
  height: 26px;
}

.apps {
  display: flex;
  height: 100%;
  margin-left: 6px;
}

.apps button {
  width: 65px;
}

.apps svg {
  width: 40px;
  height: 36px;
}

.apps .open {
  background: linear-gradient(#7eaed4, #7eaed4) 50% 100% / 51px 3px no-repeat;
}

.apps .current {
  background:
    linear-gradient(#7eaed4, #7eaed4) 50% 100% / 58px 3px no-repeat,
    linear-gradient(#44525b, #44525b) 50% 0 / 58px 100% no-repeat;
}

.tray {
  display: flex;
  align-items: center;
  height: 100%;
  margin-left: auto;
}

.weather {
  gap: 19px;
  font-size: 21px;
}

.weather svg {
  width: 30px;
  height: 28px;
}

.tray-icons {
  display: flex;
  height: 100%;
  margin-left: 20px;
}

.tray-icons button {
  width: 40px;
}

.tray-icons svg {
  width: 26px;
  height: 24px;
}

.clock {
  width: 112px;
  font-size: 20px;
  line-height: 28px;
}

.taskbar .notify {
  position: relative;
  justify-content: flex-start;
  width: 90px;
  padding-left: 21px;
}

.notify svg {
  width: 28px;
  height: 28px;
}

.badge {
  position: absolute;
  left: 34px;
  top: 25px;
  width: 26px;
  height: 26px;
  border: 1px solid #aab0b6;
  border-radius: 50%;
  background: #2c343d;
  font-size: 17px;
  line-height: 24px;
  text-align: center;
}
```
